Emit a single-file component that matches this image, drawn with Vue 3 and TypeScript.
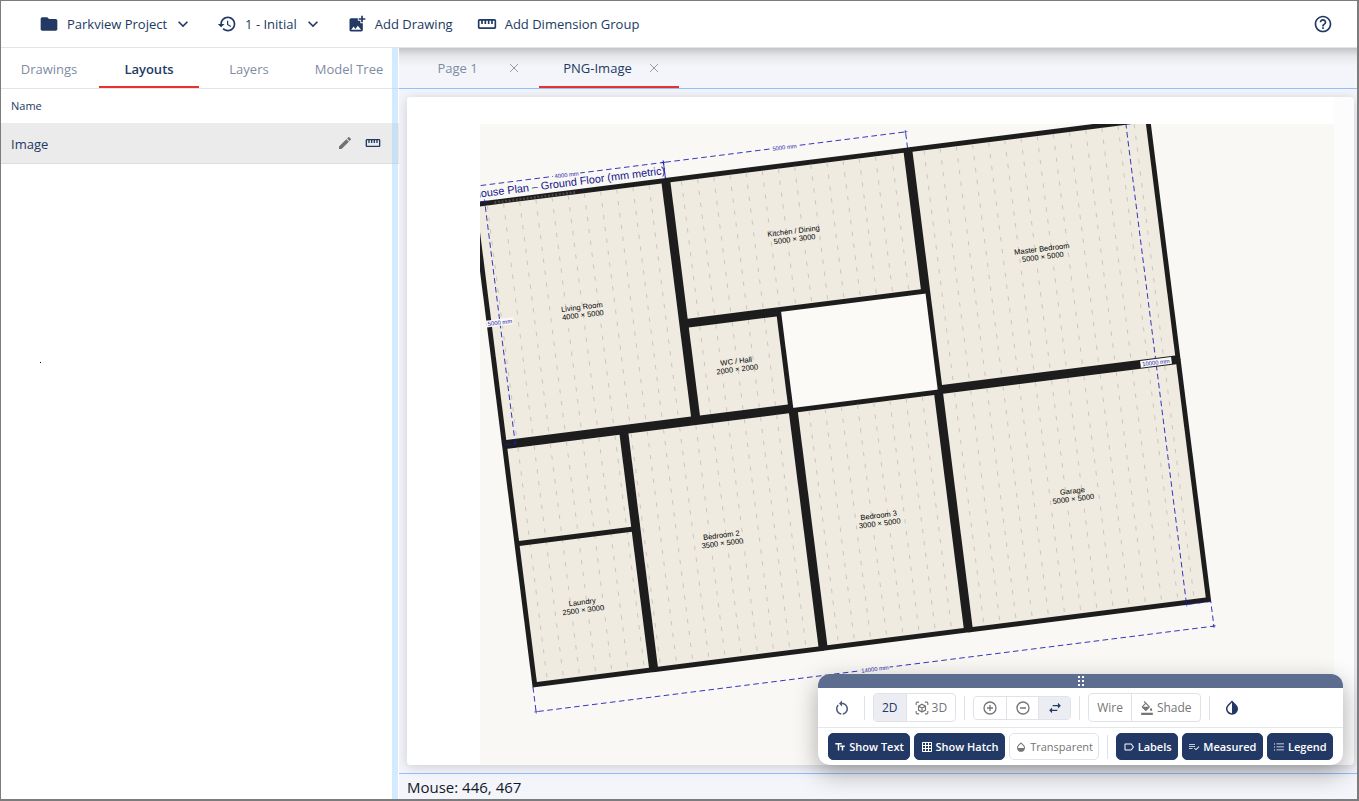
<script setup lang="ts">
import { ref } from 'vue'

interface Room { x: number; y: number; w: number; h: number; label: string; size: string; cx?: number; cy?: number }
interface Dimension { x1: number; y1: number; x2: number; y2: number; text: string; ex: number; ey: number; tag: number }

const icons = {
  folder: 'M10 4H4c-1.1 0-1.99.9-1.99 2L2 18c0 1.1.9 2 2 2h16c1.1 0 2-.9 2-2V8c0-1.1-.9-2-2-2h-8l-2-2z',
  history: 'M13 3c-4.97 0-9 4.03-9 9H1l3.89 3.89.07.14L9 12H6c0-3.87 3.13-7 7-7s7 3.13 7 7-3.13 7-7 7c-1.93 0-3.68-.79-4.94-2.06l-1.42 1.42C8.27 19.99 10.51 21 13 21c4.97 0 9-4.03 9-9s-4.03-9-9-9zm-1 5v5l4.28 2.54.72-1.21-3.5-2.08V8H12z',
  addImage: 'M19 7v2.99s-1.99.01-2 0V7h-3s.01-1.99 0-2h3V2h2v3h3v2h-3zm-3 4V8h-3V5H5c-1.1 0-2 .9-2 2v12c0 1.1.9 2 2 2h12c1.1 0 2-.9 2-2v-8h-3zM5 19l3-4 2 3 3-4 4 5H5z',
  ruler: 'M21 6H3c-1.1 0-2 .9-2 2v8c0 1.1.9 2 2 2h18c1.1 0 2-.9 2-2V8c0-1.1-.9-2-2-2zm0 10H3V8h2v4h2V8h2v4h2V8h2v4h2V8h2v4h2V8h2v8z',
  help: 'M11 18h2v-2h-2v2zm1-16C6.48 2 2 6.48 2 12s4.48 10 10 10 10-4.48 10-10S17.52 2 12 2zm0 18c-4.41 0-8-3.59-8-8s3.59-8 8-8 8 3.59 8 8-3.59 8-8 8zm0-14c-2.21 0-4 1.79-4 4h2c0-1.1.9-2 2-2s2 .9 2 2c0 2-3 1.75-3 5h2c0-2.25 3-2.5 3-5 0-2.21-1.79-4-4-4z',
  chevron: 'M7.41 8.59L12 13.17l4.59-4.58L18 10l-6 6-6-6 1.41-1.41z',
  edit: 'M3 17.25V21h3.75L17.81 9.94l-3.75-3.75L3 17.25zM20.71 7.04c.39-.39.39-1.02 0-1.41l-2.34-2.34c-.39-.39-1.02-.39-1.41 0l-1.83 1.83 3.75 3.75 1.83-1.83z',
  restart: 'M12 5V2L8 6l4 4V7c3.31 0 6 2.69 6 6 0 2.97-2.17 5.43-5 5.91v2.02c3.95-.49 7-3.85 7-7.93 0-4.42-3.58-8-8-8zM6 13c0-1.65.67-3.15 1.76-4.24L6.34 7.34C4.9 8.79 4 10.79 4 13c0 4.08 3.05 7.44 7 7.93v-2.02c-2.83-.48-5-2.94-5-5.91z',
  fill: 'M16.56 8.94L7.62 0 6.21 1.41l2.38 2.38-5.15 5.15c-.59.59-.59 1.54 0 2.12l5.5 5.5c.29.29.68.44 1.06.44s.77-.15 1.06-.44l5.5-5.5c.59-.58.59-1.53 0-2.12zM5.21 10L10 5.21 14.79 10H5.21zM19 11.5s-2 2.17-2 3.5c0 1.1.9 2 2 2s2-.9 2-2c0-1.33-2-3.5-2-3.5zM2 20h20v4H2v-4z',
  invert: 'M12 4.81V19c-3.31 0-6-2.63-6-5.87 0-1.56.62-3.03 1.75-4.14L12 4.81M6.35 7.56C4.9 8.99 4 10.96 4 13.13 4 17.48 7.58 21 12 21s8-3.52 8-7.87c0-2.17-.9-4.14-2.35-5.57L12 2 6.35 7.56z',
  text: 'M2.5 4v3h5v12h3V7h5V4h-13zm19 5h-9v3h3v7h3v-7h3V9z',
  grid: 'M20 2H4c-1.1 0-2 .9-2 2v16c0 1.1.9 2 2 2h16c1.1 0 2-.9 2-2V4c0-1.1-.9-2-2-2zM8 20H4v-4h4v4zm0-6H4v-4h4v4zm0-6H4V4h4v4zm6 12h-4v-4h4v4zm0-6h-4v-4h4v4zm0-6h-4V4h4v4zm6 12h-4v-4h4v4zm0-6h-4v-4h4v4zm0-6h-4V4h4v4z',
  opacity: 'M17.66 8L12 2.35 6.34 8C4.78 9.56 4 11.64 4 13.64s.78 4.11 2.34 5.67 3.61 2.35 5.66 2.35 4.1-.79 5.66-2.35S20 15.64 20 13.64 19.22 9.56 17.66 8zM6 14c.01-2 .62-3.27 1.76-4.4L12 5.27l4.24 4.38C17.38 10.77 17.99 12 18 14H6z',
  label: 'M17.63 5.84C17.27 5.33 16.67 5 16 5L5 5.01C3.9 5.01 3 5.9 3 7v10c0 1.1.9 1.99 2 1.99L16 19c.67 0 1.27-.33 1.63-.84L22 12l-4.37-6.16zM16 17H5V7h11l3.55 5L16 17z',
  check: 'M2 6h12v1.500H2zM2 10h12v1.500H2zM2 14h7v1.500H2zM21.5 10.600l1.200 1.200-6.700 6.700-4-4 1.200-1.200 2.800 2.800z',
  list: 'M2 5h2v2H2zM2 11h2v2H2zM2 17h2v2H2zM7 5h15v1.600H7zM7 11h15v1.600H7zM7 17h15v1.600H7z',
}

const sideTabs = ['Drawings', 'Layouts', 'Layers', 'Model Tree']
const activeSide = ref('Layouts')
const pages = ['Page 1', 'PNG-Image']
const activePage = ref('PNG-Image')
const view = ref('2D')

const leftToggles = [
  { name: 'Show Text', icon: icons.text, on: true },
  { name: 'Show Hatch', icon: icons.grid, on: true },
  { name: 'Transparent', icon: icons.opacity, on: false },
]
const rightToggles = [
  { name: 'Labels', icon: icons.label },
  { name: 'Measured', icon: icons.check },
  { name: 'Legend', icon: icons.list },
]

// Plan geometry, in millimetres
const wall = 92
const rooms: Room[] = [
  { x: 0, y: 0, w: 4000, h: 5000, label: 'Living Room', size: '4000 × 5000' },
  { x: 4000, y: 0, w: 5000, h: 3000, label: 'Kitchen / Dining', size: '5000 × 3000' },
  { x: 9000, y: 0, w: 5000, h: 5000, label: 'Master Bedroom', size: '5000 × 5000' },
  { x: 4000, y: 3000, w: 2000, h: 2000, label: 'WC / Hall', size: '2000 × 2000' },
  { x: 0, y: 5000, w: 2500, h: 5000, label: 'Laundry', size: '2500 × 3000', cx: 1250, cy: 8500 },
  { x: 2500, y: 5000, w: 3500, h: 5000, label: 'Bedroom 2', size: '3500 × 5000' },
  { x: 6000, y: 5000, w: 3000, h: 5000, label: 'Bedroom 3', size: '3000 × 5000' },
  { x: 9000, y: 5000, w: 5000, h: 5000, label: 'Garage', size: '5000 × 5000' },
]
const pitch = 334
const hatch = rooms.flatMap((r) => {
  const lines: { x: number; y1: number; y2: number }[] = []
  for (let x = -25; x < r.x + r.w - wall; x += pitch) {
    if (x > r.x + wall) lines.push({ x, y1: r.y + wall, y2: r.y + r.h - wall })
  }
  return lines
})
const dims: Dimension[] = [
  { x1: 0, y1: -330, x2: 4000, y2: -330, text: '4000 mm', ex: 0, ey: 330, tag: 560 },
  { x1: 4000, y1: -330, x2: 9000, y2: -330, text: '5000 mm', ex: 0, ey: 330, tag: 560 },
  { x1: 0, y1: 10510, x2: 14000, y2: 10510, text: '14000 mm', ex: 0, ey: -510, tag: 600 },
  { x1: 265, y1: 0, x2: 265, y2: 5000, text: '5000 mm', ex: -265, ey: 0, tag: 560 },
  { x1: 13500, y1: 0, x2: 13500, y2: 10000, text: '10000 mm', ex: 500, ey: 0, tag: 640 },
]
</script>

<template>
  <div class="app">
    <header class="topbar">
      <button class="tool">
        <svg class="i20" viewBox="0 0 24 24"><path :d="icons.folder" /></svg>
        <span>Parkview Project</span>
        <svg class="i20 chev" viewBox="0 0 24 24"><path :d="icons.chevron" /></svg>
      </button>
      <button class="tool">
        <svg class="i20" viewBox="0 0 24 24"><path :d="icons.history" /></svg>
        <span>1 - Initial</span>
        <svg class="i20 chev" viewBox="0 0 24 24"><path :d="icons.chevron" /></svg>
      </button>
      <button class="tool">
        <svg class="i20" viewBox="0 0 24 24"><path :d="icons.addImage" /></svg>
        <span>Add Drawing</span>
      </button>
      <button class="tool">
        <svg class="i20" viewBox="0 0 24 24"><path :d="icons.ruler" /></svg>
        <span>Add Dimension Group</span>
      </button>
      <button class="tool help" aria-label="Help">
        <svg class="i20" viewBox="0 0 24 24"><path :d="icons.help" /></svg>
      </button>
    </header>

    <div class="body">
      <aside class="side">
        <nav class="side-tabs">
          <button v-for="t in sideTabs" :key="t" :class="{ active: t === activeSide }" @click="activeSide = t">{{ t }}</button>
        </nav>
        <div class="list-head">Name</div>
        <div class="list-row">
          <span>Image</span>
          <button aria-label="Edit"><svg class="i16 grey" viewBox="0 0 24 24"><path :d="icons.edit" /></svg></button>
          <button aria-label="Measure"><svg class="i16" viewBox="0 0 24 24"><path :d="icons.ruler" /></svg></button>
        </div>
        <i class="dot"></i>
        <div class="splitter"></div>
      </aside>

      <main class="main">
        <nav class="page-tabs">
          <div v-for="p in pages" :key="p" class="page-tab" :class="{ active: p === activePage }">
            <button class="page-name" @click="activePage = p">{{ p }}</button>
            <button class="close" :aria-label="'Close ' + p">
              <svg viewBox="0 0 10 10"><path d="M1 1l8 8M9 1l-8 8" /></svg>
            </button>
          </div>
        </nav>

        <section class="stage">
          <div class="card">
            <div class="sheet">
              <svg class="plan" viewBox="0 0 854 641" preserveAspectRatio="xMinYMin slice">
                <rect width="2000" height="2000" fill="#f9f8f4" />
                <g transform="translate(-8.2 78.9) rotate(-7.2) scale(.0488)">
                  <rect x="6000" y="3000" width="3000" height="2000" fill="#fbfaf7" />
                  <rect
                    v-for="r in rooms" :key="r.label"
                    :x="r.x - 8" :y="r.y - 8" :width="r.w + 16" :height="r.h + 16" fill="#1d1d1d"
                  />
                  <rect
                    v-for="r in rooms" :key="r.size + r.label"
                    :x="r.x + wall" :y="r.y + wall" :width="r.w - 2 * wall" :height="r.h - 2 * wall" fill="#efebe0"
                  />
                  <path class="hatch" :d="hatch.map((l) => `M${l.x} ${l.y1}V${l.y2}`).join('')" />
                  <path d="M46 7046H2454" stroke="#1d1d1d" stroke-width="100" />
                  <path d="M460 50H2150" stroke="#484848" stroke-width="50" stroke-dasharray="40 34" />
                  <g v-for="(d, n) in dims" :key="n">
                    <path
                      class="dim"
                      :d="`M${d.x1 + d.ex} ${d.y1 + d.ey}L${d.x1} ${d.y1}L${d.x2} ${d.y2}l${d.ex} ${d.ey}`"
                    />
                    <path class="tick" :d="`M${d.x2 - 40} ${d.y2}h80m-40 -40v80M${d.x1 - 40} ${d.y1}h80m-40 -40v80`" />
                    <rect
                      :x="(d.x1 + d.x2 - d.tag) / 2" :y="(d.y1 + d.y2) / 2 - 70"
                      :width="d.tag" height="140" fill="#f9f8f4"
                    />
                    <text class="dim-text" :x="(d.x1 + d.x2) / 2" :y="(d.y1 + d.y2) / 2 + 44">{{ d.text }}</text>
                  </g>
                  <text class="title" x="4010" y="-90">House Plan – Ground Floor (mm metric)</text>
                  <g v-for="r in rooms" :key="r.label" class="room-text">
                    <text :x="(r.cx ?? r.x + r.w / 2) - 30" :y="(r.cy ?? r.y + r.h / 2) - 50">{{ r.label }}</text>
                    <text :x="(r.cx ?? r.x + r.w / 2) - 30" :y="(r.cy ?? r.y + r.h / 2) + 116">{{ r.size }}</text>
                  </g>
                </g>
              </svg>
            </div>
          </div>

          <div class="palette">
            <div class="grip">
              <svg viewBox="0 0 6 10"><path d="M0 0h2v2H0zM4 0h2v2H4zM0 4h2v2H0zM4 4h2v2H4zM0 8h2v2H0zM4 8h2v2H4z" /></svg>
            </div>
            <div class="row first">
              <button class="bare" aria-label="Reset view"><svg class="i18" viewBox="0 0 24 24"><path :d="icons.restart" /></svg></button>
              <span class="sep"></span>
              <div class="group">
                <button :class="{ on: view === '2D' }" @click="view = '2D'">2D</button>
                <button :class="{ on: view === '3D' }" @click="view = '3D'">
                  <svg class="i14 stroke" viewBox="0 0 24 24">
                    <path d="M2 7V4q0-2 2-2h3M17 2h3q2 0 2 2v3M22 17v3q0 2-2 2h-3M7 22H4q-2 0-2-2v-3M12 5.500l6 3.300v6.800l-6 3.400-6-3.400V8.800zM6 8.800l6 3.400 6-3.400M12 12.200V19" />
                  </svg>3D
                </button>
              </div>
              <span class="sep"></span>
              <div class="group small">
                <button aria-label="Zoom in"><svg class="i16 stroke" viewBox="0 0 24 24"><path d="M12 3a9 9 0 1 0 0 18a9 9 0 1 0 0-18M12 7.500v9M7.500 12h9" /></svg></button>
                <button aria-label="Zoom out"><svg class="i16 stroke" viewBox="0 0 24 24"><path d="M12 3a9 9 0 1 0 0 18a9 9 0 1 0 0-18M7.500 12h9" /></svg></button>
                <button class="on" aria-label="Pan"><svg class="i14" viewBox="0 0 24 24"><path d="M17 3l5 5-5 5V9H8V7h9zM7 11l-5 5 5 5v-4h9v-2H7z" /></svg></button>
              </div>
              <span class="sep"></span>
              <div class="group">
                <button>Wire</button>
                <button><svg class="i14" viewBox="0 0 24 24"><path :d="icons.fill" /></svg>Shade</button>
              </div>
              <span class="sep"></span>
              <button class="bare dark" aria-label="Invert colours"><svg class="i18" viewBox="0 0 24 24"><path :d="icons.invert" /></svg></button>
            </div>
            <div class="row second">
              <button v-for="t in leftToggles" :key="t.name" class="pill" :class="{ solid: t.on }">
                <svg class="i12" viewBox="0 0 24 24"><path :d="t.icon" /></svg>{{ t.name }}
              </button>
              <span class="sep"></span>
              <button v-for="t in rightToggles" :key="t.name" class="pill solid">
                <svg class="i12" viewBox="0 0 24 24"><path :d="t.icon" /></svg>{{ t.name }}
              </button>
            </div>
          </div>
        </section>

        <footer class="status">Mouse: 446, 467</footer>
      </main>
    </div>
  </div>
</template>

<style>
body { margin: 0; }
</style>

<style scoped>
.app {
  box-sizing: border-box;
  height: 100vh;
  display: flex;
  flex-direction: column;
  border: 1px solid #7c7c7c;
  border-width: 1px 2px 2px 1px;
  background: #fff;
  color: #223963;
  font: 13px/18px "Open Sans", "Noto Sans", sans-serif;
  overflow: hidden;
}
button {
  margin: 0;
  padding: 0;
  border: 0;
  background: none;
  color: inherit;
  font: inherit;
  cursor: pointer;
}
svg { display: block; fill: currentColor; flex: none; }
.i20 { width: 20px; height: 20px; }
.i18 { width: 18px; height: 18px; }
.i16 { width: 16px; height: 16px; }
.i14 { width: 14px; height: 14px; }
.i12 { width: 12px; height: 12px; }
.stroke { fill: none; stroke: currentColor; stroke-width: 2; }
.grey { color: #707070; }

.topbar {
  display: flex;
  align-items: center;
  gap: 24px;
  height: 46px;
  padding: 0 24px 0 38px;
  border-bottom: 1px solid #e3e4e8;
  background: #fff;
  flex: none;
}
.tool { display: flex; align-items: center; gap: 8px; font-weight: 500; white-space: nowrap; }
.chev { margin-left: -2px; }
.help { margin-left: auto; }

.body { flex: 1; display: flex; min-height: 0; }
.side {
  position: relative;
  width: 398px;
  flex: none;
  overflow: hidden;
  background: #fff;
  z-index: 1;
}
.side-tabs { display: flex; height: 40px; margin-left: -2px; border-bottom: 1px solid #e3e4e8; }
.side-tabs button {
  width: 100px;
  flex: none;
  padding-top: 3px;
  border-bottom: 2px solid transparent;
  color: #7f8ba3;
  font-weight: 500;
}
.side-tabs .active { color: #223963; border-color: #e5332e; font-weight: 600; }
.list-head { padding: 0 10px; font-size: 11px; line-height: 34px; }
.list-row {
  display: flex;
  align-items: center;
  gap: 12px;
  height: 40px;
  padding: 0 18px 0 10px;
  border-bottom: 1px solid #dcdcdc;
  background: #ebebeb;
}
.list-row span { flex: 1; padding-top: 2px; }
.dot { position: absolute; left: 39px; top: 314px; width: 1px; height: 1px; background: #000; }
.splitter { position: absolute; right: 1px; top: 0; bottom: 0; width: 6px; background: rgba(160, 208, 255, .45); }

.main {
  flex: 1;
  min-width: 0;
  display: flex;
  flex-direction: column;
  background: #f4f5fa;
}
.page-tabs {
  display: flex;
  height: 40px;
  border-bottom: 1px solid #94c0fb;
  background: linear-gradient(#c2c3c7, #e6e7eb 8px, #f4f5fa 18px);
  flex: none;
}
.page-tab {
  box-sizing: border-box;
  display: flex;
  align-items: center;
  width: 140px;
  padding: 2px 19px 0 8px;
  border-bottom: 2px solid transparent;
  color: #7f8ba3;
}
.page-tab.active { border-color: #e5332e; color: #223963; }
.page-name { flex: 1; }
.close { width: 12px; color: #9a9a9a; }
.close svg { width: 10px; height: 10px; margin: auto; fill: none; stroke: currentColor; }

.stage { position: relative; flex: 1; min-height: 0; padding: 8px 3px 8px 8px; display: flex; }
.card {
  flex: 1;
  min-width: 0;
  padding-right: 20px;
  border-radius: 4px;
  background: #fcfcfc;
  box-shadow: 0 2px 12px rgba(60, 64, 80, .22);
  overflow: hidden;
  display: flex;
}
.sheet { flex: 1; min-width: 0; padding: 27px 0 0 73px; background: #fff; display: flex; }
.plan { flex: 1; min-width: 0; width: 100%; height: 100%; overflow: hidden; }
.hatch { fill: none; stroke: #c8c4b9; stroke-width: 18; stroke-dasharray: 90 155; }
.dim { fill: none; stroke: #1c1cb4; stroke-width: 17; stroke-dasharray: 115 70; }
.tick { fill: none; stroke: #1c1cb4; stroke-width: 12; }
.title { font: 223px "Liberation Sans", sans-serif; fill: #14148c; text-anchor: end; }
.dim-text { font: 120px "Liberation Sans", sans-serif; fill: #1c1cae; text-anchor: middle; }
.room-text { font: 154px "Liberation Sans", sans-serif; fill: #000; text-anchor: middle; }

.palette {
  position: absolute;
  right: 14px;
  bottom: 8px;
  width: 525px;
  border-radius: 12px;
  background: #fff;
  box-shadow: 0 8px 24px rgba(0, 0, 0, .32);
  overflow: hidden;
}
.grip { height: 14px; display: flex; align-items: center; justify-content: center; background: #5d6d8f; color: #fff; }
.grip svg { width: 6px; height: 10px; }
.row { display: flex; align-items: center; padding: 0 10px; }
.first { height: 39px; gap: 8px; border-bottom: 1px solid #e4e6ee; color: #757575; font-size: 12px; }
.second { height: 37px; gap: 4px; }
.sep { width: 1px; height: 24px; background: #e0e2ea; }
.second .sep { margin: 0 4px; }
.bare { width: 28px; height: 28px; display: flex; align-items: center; justify-content: center; color: #4a5b80; }
.dark { color: #223963; }
.group { display: flex; height: 27px; border: 1px solid #e0e2ea; border-radius: 4px; overflow: hidden; }
.group button { display: flex; align-items: center; justify-content: center; gap: 3px; padding: 0 8px; }
.group button + button { border-left: 1px solid #e0e2ea; }
.group .on { background: #ebedf3; color: #223963; }
.small { height: 22px; }
.small button { width: 32px; padding: 0; box-sizing: border-box; }
.pill {
  box-sizing: border-box;
  display: flex;
  flex: 1 1 auto;
  align-items: center;
  justify-content: center;
  gap: 3px;
  height: 27px;
  padding: 0 4px;
  border: 1px solid #e0e2ea;
  border-radius: 5px;
  color: #757575;
  font-size: 11px;
  white-space: nowrap;
}
.solid { background: #233965; border-color: #233965; color: #fff; font-weight: 600; }

.status {
  height: 25px;
  flex: none;
  padding: 0 8px;
  border-top: 1px solid #94c0fb;
  color: #111827;
  font-size: 15px;
  line-height: 26px;
}
</style>
